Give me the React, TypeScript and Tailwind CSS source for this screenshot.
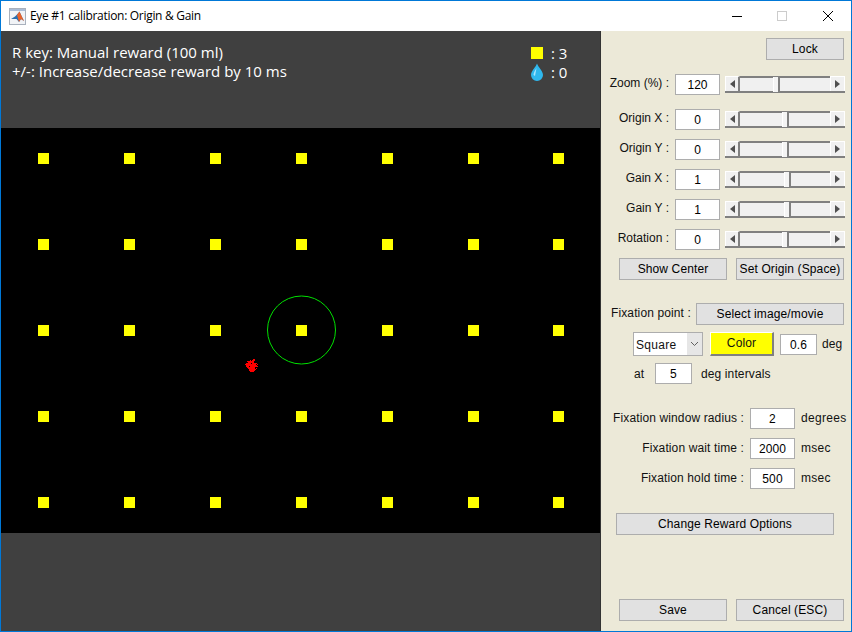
// App.tsx
import React from "react";

const xCols = [0, 1, 2, 3, 4, 5, 6];
const yRows = [0, 1, 2, 3, 4];

// eye trace blob, one run of pixels per row: [y, x, width]
const eyeTrace = [
  [0, 8, 2], [1, 5, 1], [1, 7, 3], [2, 2, 7], [3, 3, 6], [4, 1, 5], [4, 7, 5], [5, 0, 11], [5, 12, 1],
  [6, 1, 11], [7, 1, 3], [7, 5, 8], [8, 2, 8], [9, 3, 7], [9, 11, 1], [10, 4, 7], [11, 4, 6], [12, 5, 4],
];

const Slider = ({ thumb }: { thumb: number }) => (
  <div className="flex w-[120px] h-[17px] bg-[#f0f0f0] border-b-2 border-b-[#808080]">
    <div className="w-[15px] h-[15px] flex items-center justify-center bg-[#f0f0f0] border-t border-l border-white border-r-2 border-r-[#808080]">
      <div className="w-0 h-0 border-y-[4px] border-y-transparent border-r-[5px] border-r-[#505050]" />
    </div>
    <div className="flex-1 flex border-t-2 border-t-[#808080]">
      <div style={{ width: thumb }} />
      <div className="w-[7px] h-[15px] -mt-[1px] bg-[#f4f4f4] border-l border-white border-r-2 border-r-[#808080]" />
    </div>
    <div className="w-[15px] h-[15px] flex items-center justify-center bg-[#f0f0f0] border-t border-r border-white border-l border-l-[#ffffff]">
      <div className="w-0 h-0 border-y-[4px] border-y-transparent border-l-[5px] border-l-[#505050]" />
    </div>
  </div>
);

const Box = ({ value, className = "w-[45px]" }: { value: string; className?: string }) => (
  <input
    readOnly
    value={value}
    className={`${className} h-[21px] bg-white border border-[#adadad] text-center text-[12px] text-black outline-none pt-[1px]`}
  />
);

const Btn = ({ label, className }: { label: string; className: string }) => (
  <button className={`h-[22px] bg-[#e1e1e1] border border-[#adadad] text-[12px] text-black whitespace-nowrap ${className}`}>{label}</button>
);

const SliderRow = ({ label, value, thumb, className }: { label: string; value: string; thumb: number; className: string }) => (
  <div className={`flex items-center h-[21px] tracking-normal ${className}`}>
    <div className="w-[61px] text-right whitespace-nowrap pb-[4px]">{label}</div>
    <div className="ml-[6px]"><Box value={value} /></div>
    <div className="ml-[5px]"><Slider thumb={thumb} /></div>
  </div>
);

const FixRow = ({ label, value, unit, className }: { label: string; value: string; unit: string; className: string }) => (
  <div className={`flex items-center h-[21px] ${className}`}>
    <div className="w-[136px] text-right whitespace-nowrap pb-[2px]">{label}</div>
    <div className="ml-[6px]"><Box value={value} /></div>
    <div className="ml-[6px] whitespace-nowrap pb-[2px] tracking-[0.3px]">{unit}</div>
  </div>
);

const App = () => {
  return (
    <div className="w-[852px] h-[632px] flex flex-col overflow-hidden bg-white border border-[#0078d7] font-['Liberation_Sans',sans-serif] text-[12px] text-[#111]">
      {/* Title bar */}
      <div className="h-[30px] flex items-center bg-white shrink-0">
        <svg className="ml-[8px] w-[17px] h-[17px]" viewBox="0 0 17 17">
          <rect x="0.5" y="0.5" width="16" height="16" fill="#f1f3f6" stroke="#a9b1bd" />
          <rect x="1" y="1" width="15" height="2" fill="#a9bcd6" />
          <path d="M2 11 L6 8.5 L8 6.5 L10.5 3.5 L13 9 L15 13 L12 11 L10 14 L7.5 11 Z" fill="#2a6fb0" />
          <path d="M8 7 L10.5 3.5 L13 9 L15 13 L12 11 L10 14 Z" fill="#e8622a" />
        </svg>
        <span className="ml-[4px] font-['Open_Sans',sans-serif] text-[12px] tracking-[-0.3px] text-black">Eye #1 calibration: Origin &amp; Gain</span>
        <div className="ml-auto flex items-center">
          <svg className="w-[12px] h-[12px]" viewBox="0 0 12 12"><path d="M1 6.5 H11" stroke="#000" /></svg>
          <svg className="ml-[33px] w-[12px] h-[12px]" viewBox="0 0 12 12"><rect x="1.5" y="1.5" width="9" height="9" fill="none" stroke="#ccc" /></svg>
          <svg className="ml-[34px] mr-[17px] w-[12px] h-[12px]" viewBox="0 0 12 12"><path d="M1 1 L11 11 M11 1 L1 11" stroke="#000" /></svg>
        </div>
      </div>

      <div className="flex flex-1 min-h-0">
        {/* Canvas */}
        <div className="w-[600px] flex flex-col bg-[#404040] border-r border-[#333]">
          <div className="h-[97px] relative font-['Open_Sans',sans-serif] font-medium text-[15px] leading-[19px] text-white pl-[11px] pt-[12px]">
            <div>R key: Manual reward (100 ml)</div>
            <div>+/-: Increase/decrease reward by 10 ms</div>
            <div className="absolute left-[530px] top-[16px] flex flex-col gap-[4px]">
              <div className="flex items-center h-[12px]">
                <div className="w-[12px] h-[12px] bg-[#ffff00]" />
                <span className="ml-[8px] leading-none">: 3</span>
              </div>
              <div className="flex items-center h-[18px] -ml-[1px]">
                <svg className="w-[14px] h-[18px]" viewBox="0 0 13 18">
                  <path d="M6.5 0.5 C7.5 4 12.5 8 12.5 12 A6 6 0 0 1 0.5 12 C0.5 8 5.5 4 6.5 0.5 Z" fill="#2fb8ee" />
                  <path d="M3 12 C3 9.5 5 7 6 5 C5.5 8 5 10 4.5 13 Z" fill="#a7e6ff" />
                </svg>
                <span className="ml-[7px] leading-none">: 0</span>
              </div>
            </div>
          </div>

          <div className="h-[405px] bg-black relative overflow-hidden">
            <div className="grid grid-cols-[repeat(6,86px)_84px] grid-rows-[repeat(5,86px)] -mt-[13px] -ml-[1px] place-items-center">
              {yRows.map((r) =>
                xCols.map((c) => <div key={`${r}-${c}`} className="w-[11px] h-[11px] bg-[#ffff00]" />)
              )}
            </div>
            {/* fixation window */}
            <svg className="absolute left-[265px] top-[166px] w-[72px] h-[72px]" viewBox="0 0 72 72">
              <circle cx="35.5" cy="36" r="34" fill="none" stroke="#00e000" strokeWidth="1" />
            </svg>
            {/* eye trace */}
            <svg className="absolute left-[244px] top-[231px] w-[13px] h-[13px]" viewBox="0 0 13 13" shapeRendering="crispEdges">
              {eyeTrace.map(([y, x, w]) => (
                <rect key={`${y}-${x}`} x={x} y={y} width={w} height="1" fill="#ff0000" />
              ))}
            </svg>
          </div>

          <div className="flex-1" />
        </div>

        {/* Control panel */}
        <div className="flex-1 bg-[#ece9d8] flex flex-col pl-[7px] tracking-[0.12px]">
          <div className="flex justify-end pr-[7px] pt-[7px]">
            <Btn label="Lock" className="w-[78px]" />
          </div>

          <SliderRow label="Zoom (%) :" value="120" thumb={33} className="mt-[14px]" />
          <SliderRow label="Origin X :" value="0" thumb={42} className="mt-[14px]" />
          <SliderRow label="Origin Y :" value="0" thumb={42} className="mt-[9px]" />
          <SliderRow label="Gain X :" value="1" thumb={44} className="mt-[9px]" />
          <SliderRow label="Gain Y :" value="1" thumb={44} className="mt-[9px]" />
          <SliderRow label="Rotation :" value="0" thumb={42} className="mt-[9px]" />

          <div className="flex mt-[8px] pl-[11px] gap-[9px]">
            <Btn label="Show Center" className="w-[108px]" />
            <Btn label="Set Origin (Space)" className="w-[108px]" />
          </div>

          <div className="flex items-center mt-[23px]">
            <div className="pl-[3px] w-[88px] whitespace-nowrap pb-[3px]">Fixation point :</div>
            <Btn label="Select image/movie" className="w-[148px]" />
          </div>

          <div className="flex items-center mt-[7px] pl-[25px]">
            <div className="w-[70px] h-[24px] flex bg-white border border-[#adadad]">
              <span className="flex-1 pl-[2px] pt-[4px] text-[12px] leading-[16px] tracking-[0.3px]">Square</span>
              <div className="w-[15px] flex items-center justify-center bg-[#e6e6e6]">
                <svg className="w-[9px] h-[6px]" viewBox="0 0 9 6"><path d="M1 1 L4.5 4.5 L8 1" fill="none" stroke="#606060" /></svg>
              </div>
            </div>
            <button className="ml-[7px] w-[64px] h-[24px] bg-[#ffff00] border-t border-l border-white border-r-2 border-b-2 border-r-[#808080] border-b-[#808080] text-[12px] text-[#111] pb-[2px]">
              Color
            </button>
            <div className="ml-[6px]"><Box value="0.6" className="w-[37px]" /></div>
            <span className="ml-[5px]">deg</span>
          </div>

          <div className="flex items-center mt-[7px] pl-[26px]">
            <span className="w-[21px]">at</span>
            <Box value="5" className="w-[37px]" />
            <span className="ml-[9px]">deg intervals</span>
          </div>

          <FixRow label="Fixation window radius :" value="2" unit="degrees" className="mt-[24px]" />
          <FixRow label="Fixation wait time :" value="2000" unit="msec" className="mt-[9px]" />
          <FixRow label="Fixation hold time :" value="500" unit="msec" className="mt-[9px]" />

          <div className="mt-[24px] pl-[8px]">
            <Btn label="Change Reward Options" className="w-[218px]" />
          </div>

          <div className="flex mt-[64px] pl-[11px] gap-[9px]">
            <Btn label="Save" className="w-[108px]" />
            <Btn label="Cancel (ESC)" className="w-[108px]" />
          </div>
        </div>
      </div>
    </div>
  );
};

export default App;
